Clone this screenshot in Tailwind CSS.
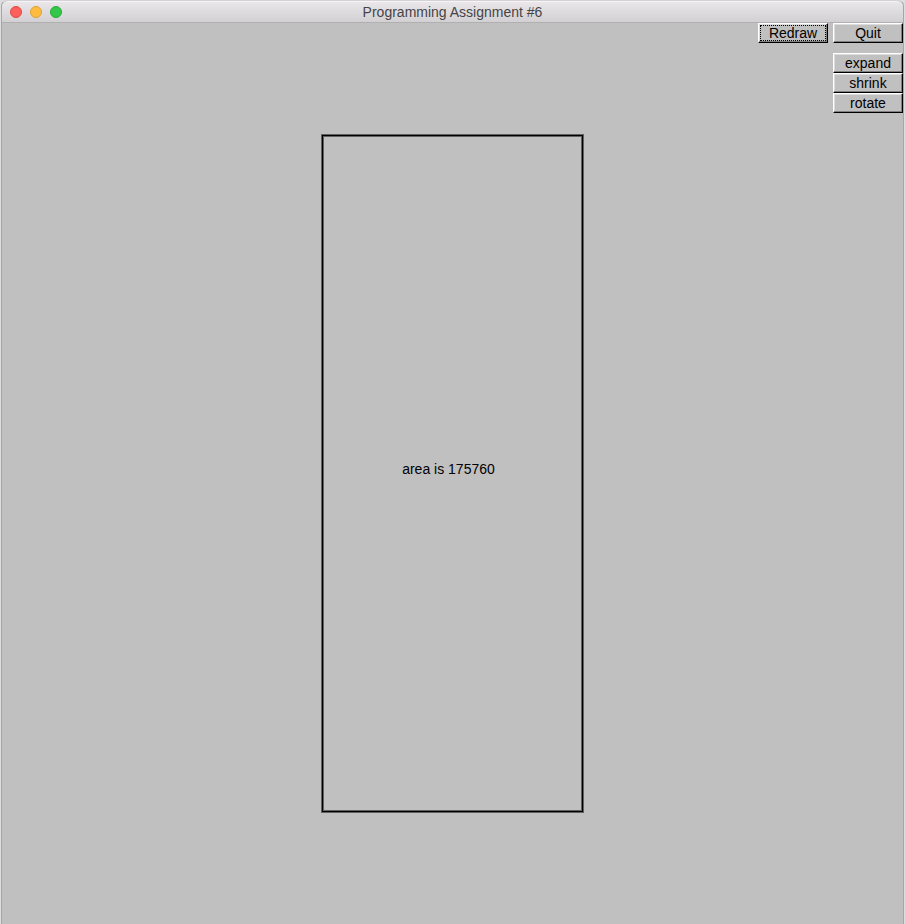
<!DOCTYPE html>
<html lang="en">
<head>
<meta charset="utf-8">
<title>Programming Assignment #6</title>
<script src="https://cdn.jsdelivr.net/npm/@tailwindcss/browser@4"></script>
</head>
<body class="bg-[#dedede] font-['Liberation_Sans',Arial,sans-serif] text-black">
<div class="mx-px flex min-h-screen flex-col rounded-t-md border-x border-t border-x-[#a6a6a6] border-t-[#d4d2d4] bg-[#c0c0c0]">
  <header class="grid h-[22px] grid-cols-[1fr_auto_1fr] items-center rounded-t-md border-b border-b-[#b0b0b0] border-t border-t-[#f6f4f6] bg-linear-to-b from-[#eae6ea] to-[#d2d0d2] px-2">
    <div class="flex gap-2">
      <button aria-label="Close" class="size-3 rounded-full border border-[#e2463f] bg-[#fc605c]"></button>
      <button aria-label="Minimize" class="size-3 rounded-full border border-[#dfa032] bg-[#fdbc40]"></button>
      <button aria-label="Zoom" class="size-3 rounded-full border border-[#24a936] bg-[#34c84a]"></button>
    </div>
    <h1 class="text-sm leading-4 text-[#464446]">Programming Assignment #6</h1>
  </header>
  <main class="grid flex-1">
    <div class="col-start-1 row-start-1 flex items-center justify-center">
      <div class="flex h-[677px] w-[261px] items-center justify-center border border-black pr-2 pb-2.5 shadow-[0_0_0_1px_#606060,inset_0_0_0_1px_#606060]">
        <p class="text-sm">area is 175760</p>
      </div>
    </div>
    <nav class="z-10 col-start-1 row-start-1 -mr-px flex items-start gap-[5px] self-start justify-self-end pr-px text-sm">
      <button class="flex h-5 w-[70px] items-center justify-center border border-t-white border-r-black border-b-black border-l-white leading-4 shadow-[inset_-1px_-1px_0_#808080,inset_1px_1px_0_#dcdcdc] outline-1 -outline-offset-3 outline-dotted outline-black">Redraw</button>
      <div class="flex flex-col">
        <button class="mb-[10px] flex h-5 w-[70px] items-center justify-center border border-t-white border-r-black border-b-black border-l-white leading-4 shadow-[inset_-1px_-1px_0_#808080,inset_1px_1px_0_#dcdcdc]">Quit</button>
        <button class="flex h-5 w-[70px] items-center justify-center border border-t-white border-r-black border-b-black border-l-white leading-4 shadow-[inset_-1px_-1px_0_#808080,inset_1px_1px_0_#dcdcdc]">expand</button>
        <button class="flex h-5 w-[70px] items-center justify-center border border-t-white border-r-black border-b-black border-l-white leading-4 shadow-[inset_-1px_-1px_0_#808080,inset_1px_1px_0_#dcdcdc]">shrink</button>
        <button class="flex h-5 w-[70px] items-center justify-center border border-t-white border-r-black border-b-black border-l-white leading-4 shadow-[inset_-1px_-1px_0_#808080,inset_1px_1px_0_#dcdcdc]">rotate</button>
      </div>
    </nav>
  </main>
</div>
</body>
</html>
